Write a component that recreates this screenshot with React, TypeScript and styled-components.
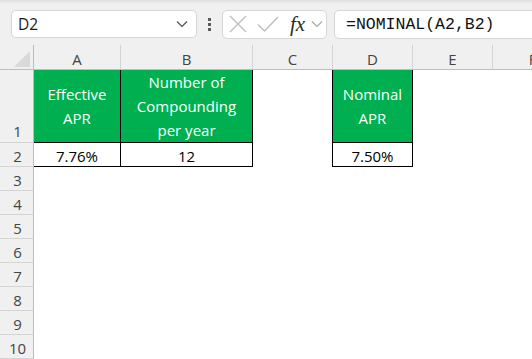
import styled, { createGlobalStyle } from "styled-components";

const GlobalStyle = createGlobalStyle`
  body {
    margin: 0;
    font-family: "Open Sans", "Noto Sans", sans-serif;
    background: #ffffff;
  }
`;

const COLS = ["A", "B", "C", "D", "E", "F"];

type CellData = {
  text?: string;
  green?: boolean;
  boxed?: boolean;
  edge?: boolean;
};

// rows 1 and 2 hold the data, the rest stay empty
const DATA: Record<number, CellData[]> = {
  1: [
    { text: "Effective APR", green: true, boxed: true },
    { text: "Number of Compounding per year", green: true, boxed: true },
    {},
    { text: "Nominal APR", green: true, boxed: true, edge: true },
    {},
    {},
  ],
  2: [
    { text: "7.76%", boxed: true },
    { text: "12", boxed: true },
    {},
    { text: "7.50%", boxed: true, edge: true },
    {},
    {},
  ],
};

const ChevronDown = ({ color }: { color: string }) => (
  <svg width="12" height="8" viewBox="0 0 12 8" fill="none">
    <path d="M1 1.5 L6 6.5 L11 1.5" stroke={color} strokeWidth="1.2" />
  </svg>
);

const CancelIcon = () => (
  <svg width="18" height="18" viewBox="0 0 18 18" fill="none">
    <path d="M1 1 L17 17 M17 1 L1 17" stroke="#bdbdbd" strokeWidth="1.3" />
  </svg>
);

const EnterIcon = () => (
  <svg width="22" height="16" viewBox="0 0 22 16" fill="none">
    <path d="M1 8.5 L7.5 15 L21 1" stroke="#bdbdbd" strokeWidth="1.3" />
  </svg>
);

function App() {
  const rows = Array.from({ length: 10 }, (_, i) => i + 1);

  return (
    <>
      <GlobalStyle />
      <Page>
        <FormulaBar>
          <NameBox>
            <NameText>D2</NameText>
            <ChevronDown color="#505050" />
          </NameBox>
          <Kebab>
            <Dot />
            <Dot />
            <Dot />
          </Kebab>
          <EditBox>
            <CancelIcon />
            <EnterIcon />
            <Fx>fx</Fx>
            <ChevronDown color="#a8a8a8" />
          </EditBox>
          <FormulaInput>=NOMINAL(A2,B2)</FormulaInput>
        </FormulaBar>

        <Sheet>
          <Corner>
            <Triangle />
          </Corner>
          {COLS.map((c) => (
            <ColHead key={c}>{c}</ColHead>
          ))}

          {rows.map((r) => (
            <Row key={r} r={r} />
          ))}
        </Sheet>
      </Page>
    </>
  );
}

function Row({ r }: { r: number }) {
  const cells = DATA[r] || COLS.map(() => ({}));
  return (
    <>
      <RowHead $tall={r === 1}>{r}</RowHead>
      {cells.map((cell, i) => (
        <Cell
          key={i}
          $green={cell.green}
          $boxed={cell.boxed}
          $edge={cell.edge}
          $tall={r === 1}
        >
          {cell.text && <CellText>{cell.text}</CellText>}
        </Cell>
      ))}
    </>
  );
}

const Page = styled.div`
  width: 532px;
  height: 359px;
  overflow: hidden;
  background: #ffffff;
`;

const FormulaBar = styled.div`
  display: flex;
  align-items: center;
  height: 45px;
  box-sizing: border-box;
  padding: 3px 0 0 11px;
  background: linear-gradient(#dedede 0px, #f0f0f0 4px, #f0f0f0 100%);
`;

const NameBox = styled.div`
  display: flex;
  align-items: center;
  justify-content: space-between;
  width: 186px;
  height: 28px;
  box-sizing: border-box;
  padding: 0 8px 0 6px;
  background: #ffffff;
  border: 1px solid #d6d6d6;
  border-radius: 5px;
`;

const NameText = styled.span`
  font-size: 15.5px;
  color: #1a1a1a;
`;

const Kebab = styled.div`
  display: flex;
  flex-direction: column;
  gap: 2px;
  margin: 0 11px 0 11px;
`;

const Dot = styled.span`
  width: 3px;
  height: 3px;
  background: #5a5a5a;
`;

const EditBox = styled.div`
  display: flex;
  align-items: center;
  width: 105px;
  height: 29px;
  box-sizing: border-box;
  padding: 0 0 0 6px;
  gap: 10px;
  background: #ffffff;
  border: 1px solid #d6d6d6;
  border-radius: 5px;

  svg:last-child {
    margin-left: -4px;
  }
`;

const Fx = styled.span`
  font-family: "Liberation Serif", "DejaVu Serif", serif;
  font-style: italic;
  font-size: 21px;
  color: #2a2a2a;
  margin-left: 1px;
  line-height: 1;
`;

const FormulaInput = styled.div`
  display: flex;
  align-items: center;
  flex: 1;
  height: 29px;
  margin: 0 -20px 0 7px;
  box-sizing: border-box;
  padding-left: 11px;
  background: #ffffff;
  border: 1px solid #d6d6d6;
  border-radius: 5px;
  font-family: "Liberation Mono", "DejaVu Sans Mono", monospace;
  font-size: 16.5px;
  color: #111111;
`;

const Sheet = styled.div`
  display: grid;
  grid-template-columns: 34px 87px 132px 80px 80px 80px 80px;
  grid-template-rows: 25px 73px repeat(9, 24px);
`;

const Corner = styled.div`
  position: relative;
  background: #f0f0f0;
  border-right: 1px solid #bdbdbd;
  border-bottom: 1px solid #bdbdbd;
`;

const Triangle = styled.div`
  position: absolute;
  right: 3px;
  bottom: 2px;
  width: 16px;
  height: 16px;
  background: #d9d9d9;
  clip-path: polygon(100% 0, 100% 100%, 0 100%);
`;

const ColHead = styled.div`
  display: flex;
  align-items: center;
  justify-content: center;
  padding-top: 4px;
  box-sizing: border-box;
  background: #f0f0f0;
  border-right: 1px solid #d4d4d4;
  border-bottom: 1px solid #bdbdbd;
  font-size: 15px;
  color: #444444;
`;

const RowHead = styled.div<{ $tall?: boolean }>`
  display: flex;
  align-items: ${(p) => (p.$tall ? "flex-end" : "center")};
  justify-content: center;
  padding: ${(p) => (p.$tall ? "0 0 1px 2px" : "2px 0 0 2px")};
  box-sizing: border-box;
  background: #f0f0f0;
  border-right: 1px solid #bdbdbd;
  border-bottom: 1px solid #d4d4d4;
  font-size: 15px;
  color: #444444;
`;

const Cell = styled.div<{
  $green?: boolean;
  $boxed?: boolean;
  $edge?: boolean;
  $tall?: boolean;
}>`
  display: flex;
  align-items: center;
  justify-content: center;
  box-sizing: border-box;
  background: ${(p) => (p.$green ? "#00b050" : "#ffffff")};
  color: ${(p) => (p.$green ? "#ffffff" : "#000000")};
  border-right: ${(p) => (p.$boxed ? "1px solid #000000" : "none")};
  border-bottom: ${(p) => (p.$boxed ? "1px solid #000000" : "none")};
  box-shadow: ${(p) => (p.$edge ? "-1px 0 0 #000000" : "none")};
  padding-top: ${(p) => (p.$tall ? "0" : "2px")};
`;

const CellText = styled.span`
  font-size: 15px;
  line-height: 24px;
  text-align: center;
  padding: 0 4px;
`;

export default App;
